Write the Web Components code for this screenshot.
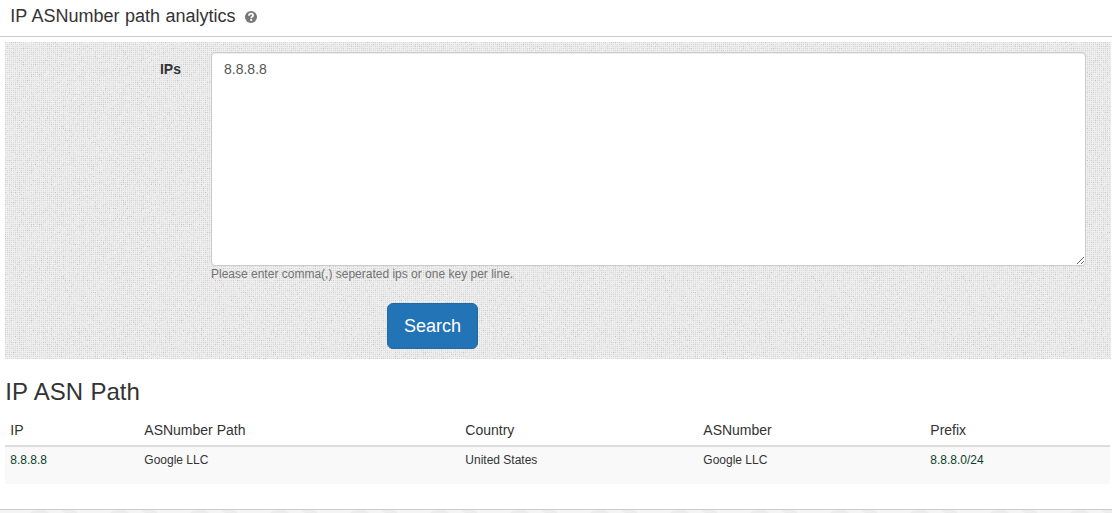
<!DOCTYPE html>
<html lang="en"><head><meta charset="utf-8"><title>IP ASNumber path analytics</title>
<style>html,body{margin:0;height:513px;overflow:hidden;background:#fff}body{font:14px/20px "Liberation Sans",Arial,sans-serif;color:#333}</style></head><body>
<asn-page></asn-page>
<script>
const define = (name, html, ready) => {
  const t = document.createElement('template');
  t.innerHTML = '<style>*{box-sizing:border-box}:host{display:block}</style>' + html;
  customElements.define(name, class extends HTMLElement {
    constructor() {
      super();
      this.attachShadow({mode: 'open'}).append(t.content.cloneNode(true));
      if (ready) ready(this.shadowRoot);
    }
  });
};

define('page-title', `<style>
:host{display:flex;height:37px;padding:6px 10.3px 0;border-bottom:1px solid #ccc;gap:9.7px}
h1{font-size:18px;line-height:20px;font-weight:400;margin:0;word-spacing:.45px}
svg{width:12px;height:12px;margin-top:5px}</style>
<h1><slot></slot></h1>
<svg viewBox="0 0 12 12"><circle cx="6" cy="6" r="6" fill="#777"/><path d="M4 4.7C4 1.9 8.1 2 8.1 4.4C8.1 5.7 6.2 5.6 6.2 7.3" fill="none" stroke="#fff" stroke-width="1.8"/><rect x="5.2" y="8.1" width="2" height="1.8" fill="#fff"/></svg>`);

// Woven background: a dot every second pixel on a light ground, with a seeded random grey.
define('woven-panel', `<style>
:host{display:block;height:317px;margin:5px 1px 0 5px;padding-top:10px;background-color:#efefef}
</style><slot></slot>`, root => {
  let seed = 41;
  const rnd = () => (seed = (seed * 16807) % 2147483647) / 2147483647;
  let s = '';
  const n = 150;
  for (let y = 0; y < n; y += 2) for (let x = 0; x < n; x += 2) {
    const r = rnd(), v = Math.round(r < .12 ? 192 + rnd() * 16 : 209 + rnd() * 22);
    s += `<path fill="rgb(${v},${v},${v})" d="M${x} ${y}h1v1h-1z"/>`;
    const a = Math.round(230 + rnd() * 10), b = Math.round(230 + rnd() * 10);
    s += `<path fill="rgb(${a},${a},${a})" d="M${x + 1} ${y}h1v1h-1z"/><path fill="rgb(${b},${b},${b})" d="M${x} ${y + 1}h1v1h-1z"/>`;
  }
  const svg = `<svg xmlns="http://www.w3.org/2000/svg" width="${n}" height="${n}" shape-rendering="crispEdges">${s}</svg>`;
  const st = document.createElement('style');
  st.textContent = `:host{background-image:url("data:image/svg+xml,${encodeURIComponent(svg)}")}`;
  root.append(st);
});

define('ip-form', `<style>
.row{display:grid;grid-template-columns:176px 875px;column-gap:30px}
label{font-weight:700;text-align:right;padding-top:7px}
textarea{display:block;width:875px;height:214px;margin:0;padding:6px 12px;border:1px solid #ccc;border-radius:4px;background:#fff;color:#555;font:14px/20px "Liberation Sans",Arial,sans-serif;box-shadow:inset 0 1px 1px rgba(0,0,0,.075);resize:vertical;outline:0}
.help{font-size:12px;line-height:17px;color:#737373}
button{display:block;width:91px;height:46px;margin:20px 0 0 382px;padding:0;border:1px solid #2268a3;border-radius:6px;background:#2374b6;color:#fff;font:18px/24px "Liberation Sans",Arial,sans-serif}
</style>
<div class="row"><label for="ips">IPs</label><div><textarea id="ips" spellcheck="false">8.8.8.8</textarea><div class="help">Please enter comma(,) seperated ips or one key per line.</div></div></div>
<button>Search</button>`);

define('asn-results', `<style>
:host{margin:19px 2px 0 5px}
h2{font-size:24px;line-height:28px;font-weight:400;margin:0 0 8px;padding-left:.3px;word-spacing:.8px}
table{border-collapse:separate;border-spacing:0;table-layout:fixed;width:1105px}
th,td{text-align:left;font-weight:400;padding:5px 5px 5px 5.3px;vertical-align:top}
th{height:33px;padding-top:6px;border-bottom:2px solid #ddd}
td{height:37px;font-size:12px;line-height:17px;background:#f9f9f9}
.ip{color:#0d3d28}
</style>
<h2>IP ASN Path</h2>
<table><colgroup><col style="width:134px"><col style="width:321px"><col style="width:238px"><col style="width:227px"><col></colgroup>
<thead><tr><th>IP</th><th>ASNumber Path</th><th>Country</th><th>ASNumber</th><th>Prefix</th></tr></thead>
<tbody><tr><td class="ip">8.8.8.8</td><td>Google LLC</td><td>United States</td><td>Google LLC</td><td class="ip">8.8.8.0/24</td></tr></tbody></table>`);

define('page-footer', `<style>:host{display:block;height:4px;border-top:1px solid #ccc;background:#f4f4f4}svg{display:block}</style>
<svg width="1112" height="3"><defs><pattern id="p" width="80" height="3" patternUnits="userSpaceOnUse"><path fill="#ececec" d="M30 3L34 0H45L49 3zM61 0H74L78 3H65z"/></pattern></defs><rect width="1112" height="3" fill="url(#p)"/></svg>`);

define('asn-page', `<style>:host{display:flex;flex-direction:column;height:513px}page-footer{margin-top:auto}</style>
<page-title>IP ASNumber path analytics</page-title>
<woven-panel><ip-form></ip-form></woven-panel>
<asn-results></asn-results>
<page-footer></page-footer>`);
</script></body></html>
